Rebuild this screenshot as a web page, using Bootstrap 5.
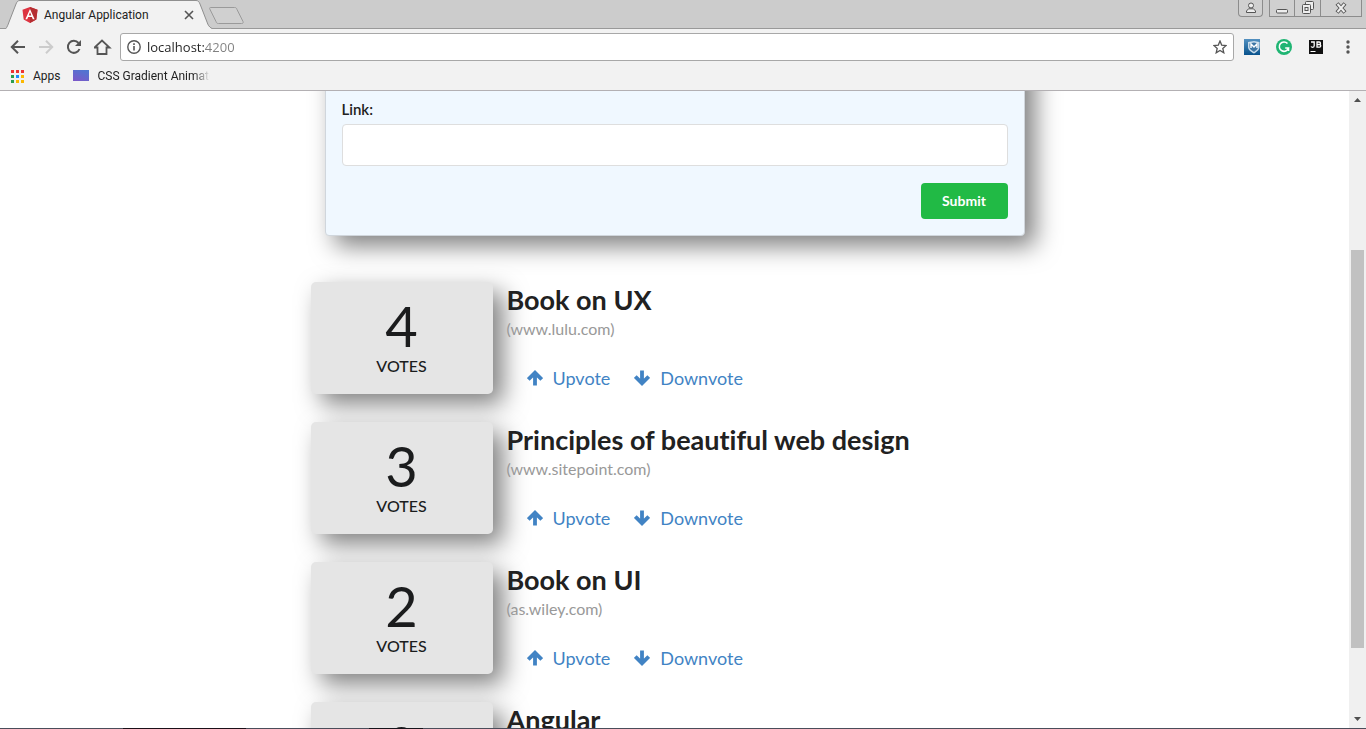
<!DOCTYPE html>
<html lang="en">
<head>
<meta charset="utf-8">
<meta name="viewport" content="width=device-width, initial-scale=1">
<title>Angular Application</title>
<link href="https://cdn.jsdelivr.net/npm/bootstrap@5.3.0/dist/css/bootstrap.min.css" rel="stylesheet">
<style>
  body { font-family: Lato, "Liberation Sans", sans-serif; font-size: 14px; color: #212121; background: #fff; }
  svg { display: block; flex: none; }
  .plain-btn { border: 0; background: none; padding: 0; display: block; }

  /* browser window */
  .chrome-ui { font-family: Roboto, "Open Sans", sans-serif; font-size: 12px; line-height: 16px; color: #222; background: #f2f2f2; }
  .tab-strip { height: 29px; background: #ccc; border-bottom: 1px solid #999; }
  .page-tab { width: 206px; height: 29px; margin-left: 6px; margin-right: -3px; margin-bottom: -1px; padding: 1px 16px 0 16px; }
  .tab-shape { position: absolute; inset: 0; }
  .tab-title { margin-left: 6px; }
  .new-tab { margin-top: 7px; }
  .win-btn { height: 17px; border: 1px solid #8c8c8c; border-top: 0; background: #d0d0d0; padding: 0; display: flex; align-items: center; justify-content: center; }
  .profile-btn { width: 25px; border-radius: 0 0 4px 4px; margin-right: 6px; }
  .min-btn, .max-btn { width: 26px; }
  .close-btn { width: 41px; }
  .tool-row { height: 36px; padding: 0 10px; }
  .address-bar { height: 28px; border: 1px solid #a8a8a8; border-radius: 3px; background: #fff; padding: 0 6px; }
  .address-input { border: 0; outline: 0; padding: 0; margin-left: 6px; font-family: "Open Sans", sans-serif; font-size: 13px; line-height: 20px; color: #222;
    background: linear-gradient(90deg, #222 57px, #808080 57px); -webkit-background-clip: text; background-clip: text; -webkit-text-fill-color: transparent; }
  .extensions { margin-left: 10px; }
  .bookmark-row { height: 26px; padding: 0 10px 4px; border-bottom: 1px solid #b3b0b3; }
  .bookmark-row a { color: #222; gap: 9px; }
  .bookmark-row a + a { margin-left: 12px; }
  .bookmark-fade { width: 112px; -webkit-mask-image: linear-gradient(90deg, #000 85%, transparent); mask-image: linear-gradient(90deg, #000 85%, transparent); }
  .swatch-icon { width: 16px; height: 11px; background: linear-gradient(20deg, #7e57c8, #4a79d2); }

  /* page */
  .text-column { width: 700px; max-width: 100%; }
  .lift { box-shadow: 10px 10px 25px rgba(0,0,0,.5); }
  .link-form { margin-top: -40px; padding: 47px 16px 16px; background: #f0f8ff; border: 1px solid #d0d6dc; border-radius: 4px; }
  .field-label { font-size: 15px; line-height: 20px; font-weight: 600; margin-bottom: 5px; }
  .link-field { height: 42px; border: 1px solid #dedede; border-radius: 4px; font-size: 14px; }
  .submit-btn { width: 87px; height: 36px; margin-top: 17px; padding: 0 0 2px; border: 0; border-radius: 4px; background: #21ba45; color: #fff; font-size: 14px; font-weight: 700; }
  .article-list { margin: 46px -14px 0; gap: 28px; }
  .vote-card { width: 25%; height: 112px; padding-top: 14px; background: #e5e5e5; border-radius: 5px; }
  .vote-count { font-size: 56px; line-height: 60px; color: #1b1c1d; }
  .vote-label { font-size: 16px; line-height: 20px; font-weight: 500; color: #1b1c1d; }
  .article-body { padding-left: 14px; }
  .article-title { font-size: 27px; line-height: 36px; font-weight: 700; margin: 0; font-variant-ligatures: none; }
  .article-host { font-size: 16px; line-height: 22px; color: #999; }
  .vote-links { margin-top: 24px; padding-left: 20px; gap: 24px; }
  .vote-links a { font-size: 18px; line-height: 28px; color: #4183c4; gap: 10px; }

  .scroll-rail { width: 17px; background: #f0f0f0; }
  .scroll-thumb { width: 13px; background: #c1c1c1; }
  .task-edge { height: 1px; background: linear-gradient(90deg, #4a4d5a 9%, #1a1018 9% 18%, #4a4d5a 18% 27%, #14141a 27% 31%, #4a4d5a 31%); }
</style>
</head>
<body class="vh-100 d-flex flex-column overflow-hidden">

<header class="chrome-ui flex-shrink-0">
  <div class="tab-strip d-flex align-items-start">
    <div class="page-tab position-relative d-flex align-items-center">
      <svg class="tab-shape" width="206" height="29" viewBox="0 0 206 29"><path d="M0 29V28.500C1 27 2 25 3 22L10 4C11 1.500 12 .5 14 .5H190C192 .5 193 1.500 194 4L201 22C202 25 203 27 206 28.500V29Z" fill="#f2f2f2"/><path d="M0 28.500C1 27 2 25 3 22L10 4C11 1.500 12 .5 14 .5H190C192 .5 193 1.500 194 4L201 22C202 25 203 27 206 28.500" fill="none" stroke="#8f8f8f"/></svg>
      <svg class="position-relative" width="16" height="16" viewBox="0 0 16 16"><path d="M8 0l7.500 2.700-1.200 9.800L8 16l-6.300-3.500L.5 2.700z" fill="#dd3340"/><path d="M8 0l7.500 2.700-1.200 9.800L8 16z" fill="#b52e31"/><path d="M8 2L3.400 12.200h1.800L6.100 10h3.800l.9 2.200h1.800zM8 5.200l1.300 3.300H6.700z" fill="#fff"/></svg>
      <span class="tab-title position-relative flex-grow-1 text-nowrap overflow-hidden">Angular Application</span>
      <button class="plain-btn position-relative" aria-label="Close tab"><svg width="14" height="14" viewBox="0 0 14 14"><path d="M3 3l8 8M11 3l-8 8" stroke="#555" stroke-width="1.600"/></svg></button>
    </div>
    <button class="plain-btn new-tab" aria-label="New tab"><svg width="35" height="18" viewBox="0 0 35 18"><path d="M1.500 .5H25.500C27 .5 27.500 1 28 2.500L34 14.500C34.500 16 34 16.500 32.500 16.500H9.500C8 16.500 7.500 16 7 14.500L.8 2C.5 1 .5 .5 1.500 .5Z" fill="#d0d0d0" stroke="#9a9a9a"/></svg></button>
    <div class="ms-auto d-flex">
      <button class="win-btn profile-btn" aria-label="Profile"><svg width="12" height="12" viewBox="0 0 12 12" fill="#eee" stroke="#555"><circle cx="6" cy="3.500" r="2.500"/><path d="M1.500 10.500V9L3.500 6.800h5L10.500 9v1.500z"/></svg></button>
      <button class="win-btn min-btn rounded-0" aria-label="Minimize"><svg width="14" height="14" viewBox="0 0 14 14"><rect x="1.500" y="8.500" width="11" height="3.500" rx="1" fill="#eee" stroke="#555"/></svg></button>
      <button class="win-btn max-btn border-start-0 rounded-0" aria-label="Restore"><svg width="14" height="14" viewBox="0 0 14 14" fill="#eee" stroke="#555"><rect x="4.500" y=".5" width="8" height="8" rx="1"/><rect x="1.500" y="3.500" width="8" height="9" rx="1"/><rect x="4" y="6.500" width="3" height="3"/></svg></button>
      <button class="win-btn close-btn border-start-0 me-1" aria-label="Close"><svg width="14" height="12" viewBox="0 0 14 12"><path d="M3 1.500l8 9M11 1.500l-8 9" stroke="#555" stroke-width="4"/><path d="M3.500 2l7 8M10.500 2l-7 8" stroke="#eee" stroke-width="2"/></svg></button>
    </div>
  </div>

  <div class="tool-row d-flex align-items-center">
    <button class="plain-btn" aria-label="Back"><svg width="16" height="16" viewBox="0 0 16 16" fill="none" stroke="#555" stroke-width="2"><path d="M15 8H2.500M8 1.800L1.800 8 8 14.200"/></svg></button>
    <button class="plain-btn ms-2 ps-1" aria-label="Forward"><svg width="16" height="16" viewBox="0 0 16 16" fill="none" stroke="#ccc" stroke-width="2"><path d="M1 8h12.500M8 1.800L14.200 8 8 14.200"/></svg></button>
    <button class="plain-btn ms-2 ps-1" aria-label="Reload"><svg width="16" height="16" viewBox="0 0 16 16"><path d="M13.500 10A6 6 0 1 1 12.500 4" fill="none" stroke="#555" stroke-width="2"/><path d="M15 1v6H9z" fill="#555"/></svg></button>
    <button class="plain-btn ms-2 ps-1" aria-label="Home"><svg width="18" height="16" viewBox="1 0 18 16"><path d="M1.500 8.500L9 1.500l7.500 7H13.500V15h-9V8.500z" fill="none" stroke="#555" stroke-width="1.800"/></svg></button>
    <div class="address-bar d-flex align-items-center flex-grow-1 ms-2">
      <svg width="14" height="14" viewBox="0 0 14 14"><circle cx="7" cy="7" r="6.200" fill="none" stroke="#555" stroke-width="1.400"/><path d="M7 6v4.500M7 3.300v1.600" stroke="#555" stroke-width="1.600"/></svg>
      <input class="address-input flex-grow-1" type="text" value="localhost:4200" aria-label="Address">
      <button class="plain-btn" aria-label="Bookmark this page"><svg width="14" height="14" viewBox="0 0 14 14"><path d="M7 1l1.700 4.100 4.400.4-3.300 2.900 1 4.400L7 10.500l-3.800 2.300 1-4.400L.9 5.500l4.400-.4z" fill="none" stroke="#555" stroke-width="1.300"/></svg></button>
    </div>
    <div class="extensions d-flex align-items-center gap-3">
      <svg width="16" height="16" viewBox="0 0 16 16"><defs><linearGradient id="shieldBg" x2="0" y2="1"><stop stop-color="#5290c0"/><stop offset="1" stop-color="#08528c"/></linearGradient></defs><path d="M0 0h16v16H0z" fill="url(#shieldBg)"/><path d="M4 3l6-1 5.500 1v5c0 3-3 5-5.500 6.500C7 13 4 11 4 8z" fill="#c9dceb"/><path d="M5.500 4.500L10 3.500l4 1V8c0 2-2 3.500-4 5-2.500-1.500-4.500-3-4.500-5z" fill="#3d76a5"/><path d="M7 9V5l3 3 3-3v4" fill="none" stroke="#fff" stroke-width="1.400"/></svg>
      <svg width="16" height="16" viewBox="0 0 16 16"><circle cx="8" cy="8" r="8" fill="#1fb573"/><path d="M11.500 4.500A4.700 4.700 0 1 0 12.500 9H9.200M12.500 8.500v3.500" fill="none" stroke="#fff" stroke-width="1.600"/></svg>
      <svg width="16" height="16" viewBox="0 0 16 16"><path d="M1 1h14v14H1z" fill="#111"/><path d="M2.500 12.500h5" stroke="#fff"/><path d="M3 3h3.200v3.800c0 1-.7 1.500-1.500 1.500S3.300 8 3 7.500M9 8.200V3h2.200c1.700 0 1.700 2.400 0 2.500H9h2.500c1.700 0 1.700 2.700 0 2.700z" fill="none" stroke="#fff" stroke-width="1.300"/></svg>
      <button class="plain-btn" aria-label="Menu"><svg width="16" height="16" viewBox="0 0 16 16" fill="#555"><circle cx="8" cy="3" r="1.700"/><circle cx="8" cy="8" r="1.700"/><circle cx="8" cy="13" r="1.700"/></svg></button>
    </div>
  </div>

  <nav class="bookmark-row d-flex align-items-center" aria-label="Bookmarks">
    <a href="#" class="d-flex align-items-center text-decoration-none">
      <svg width="14" height="14" viewBox="0 0 14 14"><path d="M1 1h3v3H1z" fill="#e33"/><path d="M6 1h3v3H6z" fill="#e33"/><path d="M11 1h3v3h-3z" fill="#e33"/><path d="M1 6h3v3H1z" fill="#2a9d4f"/><path d="M6 6h3v3H6z" fill="#1a8cff"/><path d="M11 6h3v3h-3z" fill="#fbb800"/><path d="M1 11h3v3H1z" fill="#2a9d4f"/><path d="M6 11h3v3H6zM11 11h3v3h-3z" fill="#fbb800"/></svg>
      <span>Apps</span>
    </a>
    <a href="#" class="d-flex align-items-center text-decoration-none">
      <span class="swatch-icon flex-shrink-0"></span>
      <span class="bookmark-fade text-nowrap overflow-hidden">CSS Gradient Animator</span>
    </a>
  </nav>
</header>

<div class="d-flex flex-grow-1 overflow-hidden">
  <main class="flex-grow-1 overflow-hidden">
    <div class="text-column mx-auto">
      <form class="link-form lift d-flex flex-column" onsubmit="return false">
        <label class="field-label" for="link">Link:</label>
        <input class="link-field form-control" id="link" type="text">
        <button class="submit-btn align-self-end" type="submit">Submit</button>
      </form>

      <div class="article-list d-flex flex-column">
        <article class="d-flex">
          <div class="vote-card lift text-center flex-shrink-0"><div class="vote-count">4</div><div class="vote-label">VOTES</div></div>
          <div class="article-body">
            <h2 class="article-title">Book on UX</h2>
            <div class="article-host">(www.lulu.com)</div>
            <div class="vote-links d-flex">
              <a href="#" class="d-flex align-items-center text-decoration-none"><svg width="16" height="16" viewBox="0 0 16 16"><path d="M8 15.500V4M1.300 9.500L8 2.800 14.700 9.500" fill="none" stroke="#4183c4" stroke-width="3.800"/></svg>Upvote</a>
              <a href="#" class="d-flex align-items-center text-decoration-none"><svg width="16" height="16" viewBox="0 0 16 16"><path d="M8 .5v12M1.300 6.500L8 13.200 14.700 6.500" fill="none" stroke="#4183c4" stroke-width="3.800"/></svg>Downvote</a>
            </div>
          </div>
        </article>
        <article class="d-flex">
          <div class="vote-card lift text-center flex-shrink-0"><div class="vote-count">3</div><div class="vote-label">VOTES</div></div>
          <div class="article-body">
            <h2 class="article-title">Principles of beautiful web design</h2>
            <div class="article-host">(www.sitepoint.com)</div>
            <div class="vote-links d-flex">
              <a href="#" class="d-flex align-items-center text-decoration-none"><svg width="16" height="16" viewBox="0 0 16 16"><path d="M8 15.500V4M1.300 9.500L8 2.800 14.700 9.500" fill="none" stroke="#4183c4" stroke-width="3.800"/></svg>Upvote</a>
              <a href="#" class="d-flex align-items-center text-decoration-none"><svg width="16" height="16" viewBox="0 0 16 16"><path d="M8 .5v12M1.300 6.500L8 13.200 14.700 6.500" fill="none" stroke="#4183c4" stroke-width="3.800"/></svg>Downvote</a>
            </div>
          </div>
        </article>
        <article class="d-flex">
          <div class="vote-card lift text-center flex-shrink-0"><div class="vote-count">2</div><div class="vote-label">VOTES</div></div>
          <div class="article-body">
            <h2 class="article-title">Book on UI</h2>
            <div class="article-host">(as.wiley.com)</div>
            <div class="vote-links d-flex">
              <a href="#" class="d-flex align-items-center text-decoration-none"><svg width="16" height="16" viewBox="0 0 16 16"><path d="M8 15.500V4M1.300 9.500L8 2.800 14.700 9.500" fill="none" stroke="#4183c4" stroke-width="3.800"/></svg>Upvote</a>
              <a href="#" class="d-flex align-items-center text-decoration-none"><svg width="16" height="16" viewBox="0 0 16 16"><path d="M8 .5v12M1.300 6.500L8 13.200 14.700 6.500" fill="none" stroke="#4183c4" stroke-width="3.800"/></svg>Downvote</a>
            </div>
          </div>
        </article>
        <article class="d-flex">
          <div class="vote-card lift text-center flex-shrink-0"><div class="vote-count">0</div></div>
          <div class="article-body"><h2 class="article-title">Angular</h2></div>
        </article>
      </div>
    </div>
  </main>
  <div class="scroll-rail flex-shrink-0 d-flex flex-column align-items-center" aria-hidden="true">
    <svg width="17" height="17" viewBox="0 0 17 17"><path d="M5 11l3.500-4 3.500 4z" fill="#505050"/></svg>
    <div class="flex-grow-1 d-flex flex-column w-100 align-items-center">
      <div style="flex:142"></div>
      <div class="scroll-thumb" style="flex:398"></div>
      <div style="flex:63"></div>
    </div>
    <svg width="17" height="17" viewBox="0 0 17 17"><path d="M5 6l3.500 4L12 6z" fill="#505050"/></svg>
  </div>
</div>
<div class="task-edge flex-shrink-0"></div>

<script src="https://cdn.jsdelivr.net/npm/bootstrap@5.3.0/dist/js/bootstrap.bundle.min.js"></script>
</body>
</html>
